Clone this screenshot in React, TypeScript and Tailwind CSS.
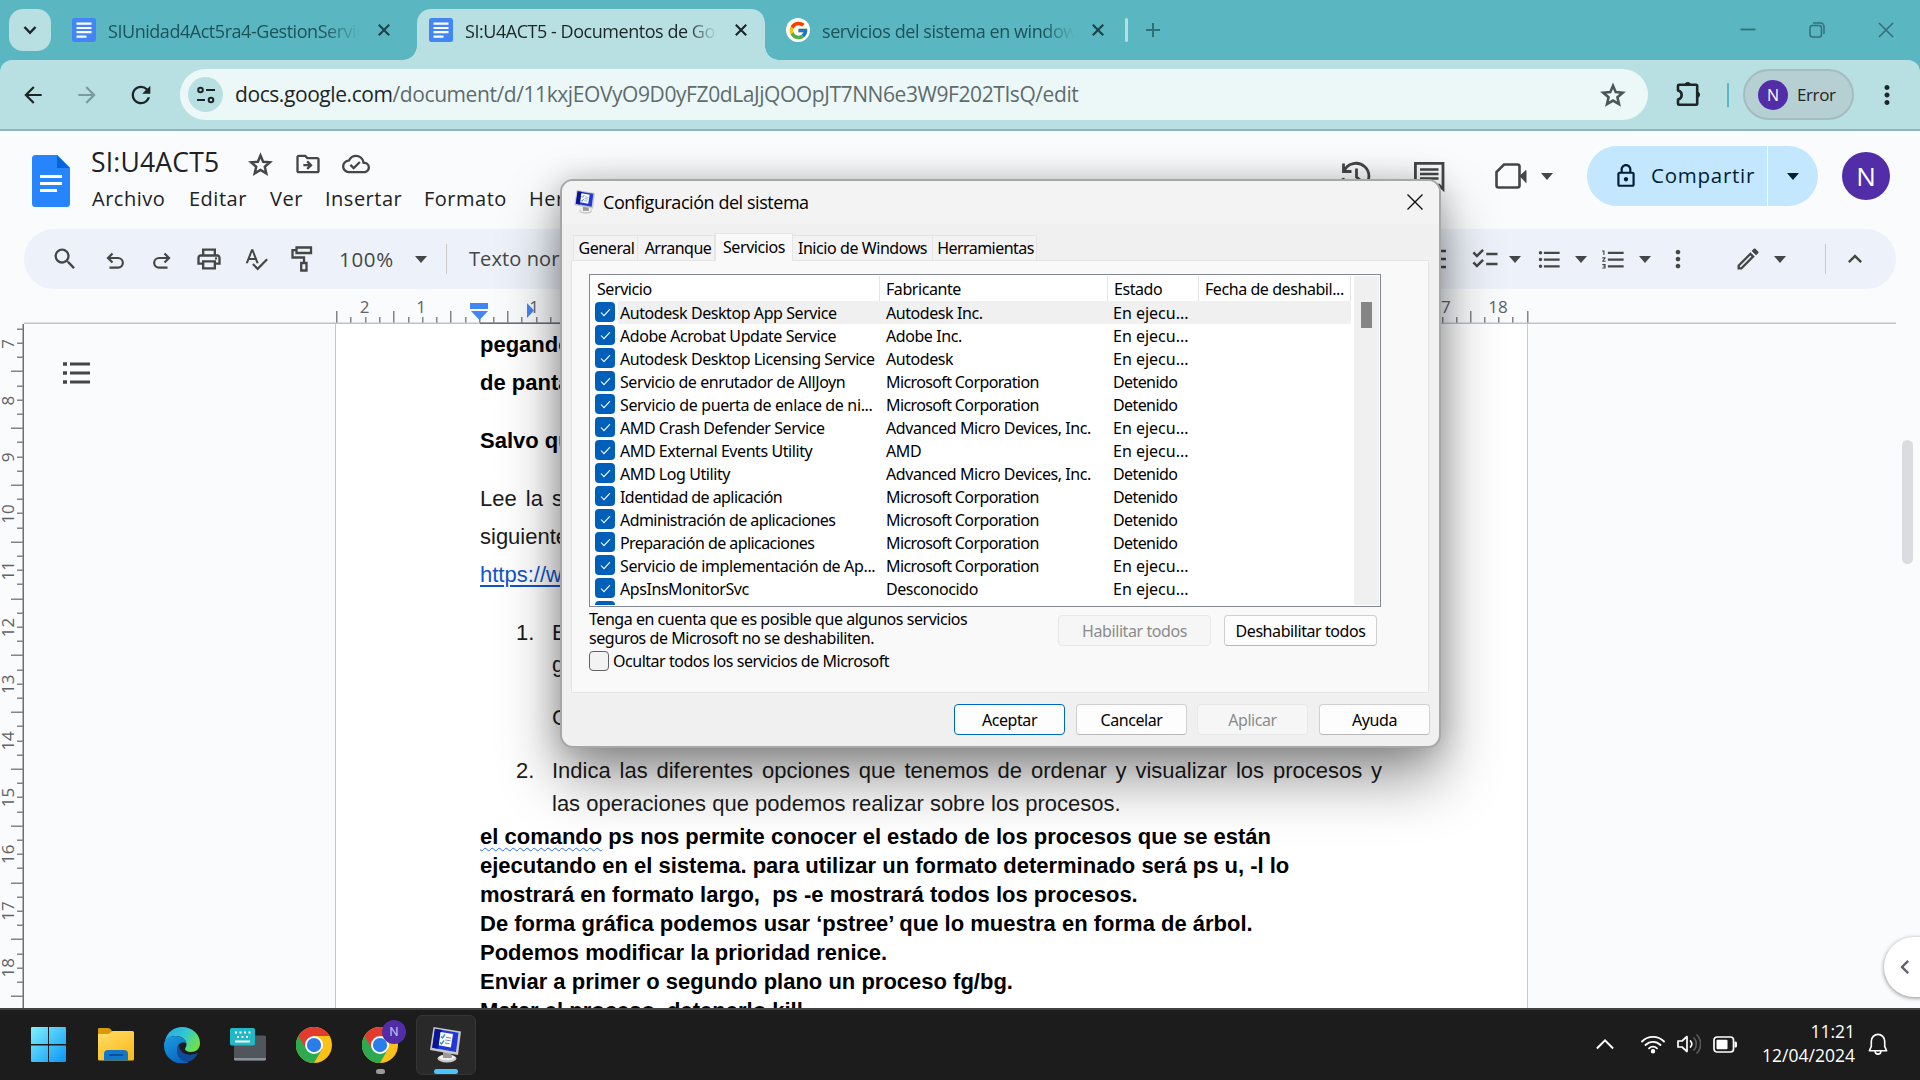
import React from "react";
import {
  MdArrowBack,
  MdArrowForward,
  MdRefresh,
  MdMoreVert,
  MdOutlineDriveFileMove,
  MdOutlineCloudDone,
  MdOutlineLock,
  MdSearch,
  MdOutlinePrint,
  MdSpellcheck,
  MdChecklist,
  MdFormatListBulleted,
  MdFormatListNumbered,
  MdOutlineEdit,
  MdKeyboardArrowUp,
  MdKeyboardArrowLeft,
  MdAdd,
} from "react-icons/md";
import { FcGoogle } from "react-icons/fc";

type Kids = { children?: React.ReactNode; className?: string };

function Slot({ children, className = "w-[47px]" }: Kids) {
  return <span className={"flex shrink-0 items-center justify-center " + className}>{children}</span>;
}

function CloseMark({ className = "" }: { className?: string }) {
  return (
    <svg viewBox="0 0 12 12" className={"size-3 shrink-0 " + className}>
      <path d="m.8.8 10.400 10.400M11.200.8.8 11.200" stroke="currentColor" strokeWidth="2.100" />
    </svg>
  );
}

function Star({ className = "" }: { className?: string }) {
  return (
    <svg viewBox="0 0 24 24" className={"shrink-0 " + className} fill="none" stroke="currentColor" strokeWidth="2.200">
      <path d="m12 4 2.350 5.550 6 .5-4.550 3.950 1.350 5.850L12 16.750l-5.150 3.100 1.350-5.850L3.650 10.050l6-.5Z" />
    </svg>
  );
}

function DocsFavicon() {
  return (
    <svg viewBox="0 0 24 24" className="size-6 shrink-0">
      <rect width="24" height="24" rx="2.5" fill="#4285f4" />
      <path d="M4.500 5.600h15M4.500 10h15M4.500 14.200h15M4.500 18.600h10" stroke="#fff" strokeWidth="2.200" />
    </svg>
  );
}

function ChromeLogo() {
  return (
    <svg viewBox="0 0 48 48" className="size-9 shrink-0">
      <circle cx="24" cy="24" r="24" fill="#fbc116" />
      <path d="M24 24 3.200 12A24 24 0 0 1 44.800 12H24Z" fill="#e33b2e" />
      <path d="M3.200 12A24 24 0 0 0 24 48L34.400 30 24 24Z" fill="#2da94f" />
      <path d="M3.200 12 13.600 30 24 13Z" fill="#e33b2e" />
      <path d="M3.200 12 13.600 30 20 40 8 30Z" fill="#2da94f" />
      <circle cx="24" cy="24" r="12" fill="#fff" />
      <circle cx="24" cy="24" r="9.500" fill="#2b7de9" />
    </svg>
  );
}

function EdgeLogo() {
  return (
    <svg viewBox="0 0 36 36" className="size-9 shrink-0">
      <defs>
        <linearGradient id="edgeTop" x1="0" y1="0" x2="1" y2="0.5">
          <stop offset="0" stopColor="#2aa3e0" />
          <stop offset="0.55" stopColor="#30c6d8" />
          <stop offset="1" stopColor="#6be04d" />
        </linearGradient>
        <linearGradient id="edgeLow" x1="0" y1="0" x2="0.5" y2="1">
          <stop offset="0" stopColor="#1b9de2" />
          <stop offset="1" stopColor="#0a67c0" />
        </linearGradient>
      </defs>
      <path d="M1 14C3 5 10 0 18 0c10 0 18 7 18 16 0 6-4 9-9 9-4 0-6-1.500-6-3 0-1 1.500-2 1.500-4.500C22.500 12 17 9 12 9 7 9 3 11 1 14Z" fill="url(#edgeTop)" />
      <path d="M0 18C0 12 5 9 11 9c6 0 11 3 11.500 8-2-2.500-8-2-9 4-1 7 5 13 11 14.500A18 18 0 0 1 0 18Z" fill="url(#edgeLow)" />
      <path d="M15.500 18C10 24 14 33 23 35.300c5-1.300 8.500-4.300 10.500-8.300.3-.8-.4-1-1-.7-9 4-18-1-17-8.300Z" fill="#0f4a9b" />
    </svg>
  );
}

function ConfigIcon({ className }: { className: string }) {
  return (
    <svg viewBox="0 0 32 36" className={className}>
      <ellipse cx="17" cy="31.500" rx="9.500" ry="4" fill="#c9c9c9" />
      <ellipse cx="17" cy="30.500" rx="8" ry="2.800" fill="#efefef" />
      <path d="m13 23 8 1.500 1 6.500h-9Z" fill="#9a9a9a" />
      <path d="M3.500 0 31 4.500 28 28 0 23Z" fill="#c8c8c8" />
      <path d="M4.900 1.700 28.500 5.700 26 25 2.200 20.800Z" fill="#2038d8" />
      <path d="M4.900 1.700 12 2.900 8 21.800 2.200 20.800Z" fill="#0a1496" />
      <path d="m10.500 5 12.500 2-2.200 13.500-12-2.200Z" fill="#fff" />
      <path d="m11 9.500 1.500 1.500 2.500-3.500M10 15.500l1.500 1.500 2.500-3.500" fill="none" stroke="#2b8fb5" strokeWidth="1.400" />
      <path d="m16 10.300 5 .8M15.500 13l5 .8M15 16l4.500.7" stroke="#6c7fc0" strokeWidth="1" />
    </svg>
  );
}

function TabStrip() {
  return (
    <div className="flex h-[60px] shrink-0 items-start bg-[#5ab6c0] pl-[9px] font-['Open_Sans',sans-serif] text-[18px] leading-[26px]">
      <div className="mt-[9px] flex h-[42px] w-[42px] items-center justify-center rounded-[14px] bg-[#b8e0e3] text-[#1d2527]">
        <svg viewBox="0 0 14 9" className="h-[9px] w-[14px]" fill="none" stroke="currentColor" strokeWidth="2.500">
          <path d="m1.500 1 5.500 5.800L12.500 1" />
        </svg>
      </div>
      <div className="ml-[21px] mt-[9px] flex h-[42px] w-[331px] items-center text-[#1e5259]">
        <DocsFavicon />
        <span className="ml-3 mt-[2px] w-[252px] overflow-hidden whitespace-nowrap tracking-[-0.46px] [mask-image:linear-gradient(to_right,#000_85%,transparent)]">
          SIUnidad4Act5ra4-GestionServicios
        </span>
        <CloseMark className="ml-[18px] text-[#1e4247]" />
      </div>
      <div className="relative ml-[14px] mt-[9px] flex h-[51px] w-[348px] items-center rounded-t-[14px] bg-[#b8e0e3] pb-[9px] pl-[12px] text-[#1d2527]">
        <span className="absolute -left-[14px] bottom-0 size-[14px] bg-[radial-gradient(circle_at_0_0,transparent_13.5px,#b8e0e3_14px)]" />
        <span className="absolute -right-[14px] bottom-0 size-[14px] bg-[radial-gradient(circle_at_100%_0,transparent_13.5px,#b8e0e3_14px)]" />
        <DocsFavicon />
        <span className="ml-3 mt-[2px] w-[252px] overflow-hidden whitespace-nowrap tracking-[-0.46px] [mask-image:linear-gradient(to_right,#000_88%,transparent)]">
          SI:U4ACT5 - Documentos de Google
        </span>
        <CloseMark className="ml-[18px]" />
      </div>
      <div className="ml-[21px] mt-[9px] flex h-[42px] items-center text-[#1e5259]">
        <span className="flex size-6 items-center justify-center rounded-full bg-white">
          <FcGoogle className="size-[21px]" />
        </span>
        <span className="ml-3 mt-[2px] w-[252px] overflow-hidden whitespace-nowrap tracking-[-0.42px] [mask-image:linear-gradient(to_right,#000_88%,transparent)]">
          servicios del sistema en windows
        </span>
        <CloseMark className="ml-[18px] text-[#1e4247]" />
        <span className="ml-[21px] h-6 w-[3px] rounded bg-[#b8e0e3]" />
        <MdAdd className="ml-[13px] size-[24px] text-[#2f7079]" />
      </div>
      <div className="ml-auto flex h-[60px] items-center pr-[26px] text-[#33707a]">
        <svg viewBox="0 0 16 16" className="size-4">
          <path d="M.5 7.500h15" stroke="currentColor" strokeWidth="1.800" />
        </svg>
        <svg viewBox="0 0 16 16" className="ml-[53px] size-4" fill="none" stroke="currentColor" strokeWidth="1.500">
          <rect x="1" y="3.500" width="11.500" height="11.500" rx="2.500" />
          <path d="M4 1h7.500A3.500 3.500 0 0 1 15 4.500V12" />
        </svg>
        <svg viewBox="0 0 16 16" className="ml-[53px] size-4">
          <path d="m1 1 14 14M15 1 1 15" stroke="currentColor" strokeWidth="1.600" />
        </svg>
      </div>
    </div>
  );
}

function AddressBar() {
  return (
    <div className="shrink-0 bg-[#5ab6c0]">
      <div className="flex h-[71px] items-center rounded-t-[12px] border-b-2 border-[#92b4b7] bg-[#b8e0e3] pl-[6px] font-['Open_Sans',sans-serif] text-[#1d2527]">
        <Slot className="w-[54px]"><MdArrowBack className="size-[26px]" /></Slot>
        <Slot className="w-[54px]"><MdArrowForward className="size-[26px] text-[#7a9a9d]" /></Slot>
        <Slot className="w-[54px]"><MdRefresh className="size-[28px]" /></Slot>
        <div className="ml-[12px] flex h-[51px] w-[1468px] items-center rounded-full bg-[#ecf8f8] pl-[8px] pr-[21px]">
          <span className="flex size-[35px] items-center justify-center rounded-full bg-[#b8e0e3]">
            <svg viewBox="0 0 20 20" className="size-5" fill="none" stroke="#1d2527" strokeWidth="2">
              <circle cx="4.500" cy="5" r="2.300" />
              <path d="M10 5h9M1 15h8" />
              <circle cx="15" cy="15" r="2.300" />
            </svg>
          </span>
          <span className="ml-[12px] whitespace-nowrap text-[21px] tracking-[-0.42px] text-[#5f6b6d]">
            <span className="text-[#1d2527]">docs.google.com</span>/document/d/11kxjEOVyO9D0yFZ0dLaJjQOOpJT7NN6e3W9F202TIsQ/edit
          </span>
          <Star className="ml-auto size-[28px] text-[#4c5557]" />
        </div>
        <svg viewBox="0 0 26 26" className="-mt-[2px] ml-[28px] size-[26px]" fill="none" stroke="currentColor" strokeWidth="2.600">
          <path d="M2 4.500Q2 3.800 3 3.800H20Q21.200 3.800 21.200 5V22.500Q21.200 23.700 20 23.700H3Q2 23.700 2 22.500V18.500A4.600 4.600 0 0 0 2 9.500Z" strokeLinejoin="round" />
          <path d="M8.800 3.500a3 2.800 0 0 1 5.800 0ZM21.500 10.800a2.800 3 0 0 1 0 5.800Z" fill="currentColor" strokeWidth="1" />
        </svg>
        <span className="ml-[25px] h-6 w-[2px] bg-[#5ab6c0]" />
        <div className="ml-[14px] flex h-[51px] w-[111px] items-center rounded-full border-2 border-[#a3bcbf] bg-[#b5cfd2] pl-[13px]">
          <span className="flex size-[30px] items-center justify-center rounded-full bg-[#512da8] text-[16px] text-white">N</span>
          <span className="ml-[9px] text-[17px] tracking-[-0.4px]">Error</span>
        </div>
        <MdMoreVert className="ml-[18px] size-[30px]" />
      </div>
    </div>
  );
}

function Caret({ className = "" }: { className?: string }) {
  return (
    <svg viewBox="0 0 12 7" className={"h-[7px] w-3 shrink-0 " + className}>
      <path d="M0 0h12L6 7Z" fill="currentColor" />
    </svg>
  );
}

function DocsHeader() {
  return (
    <div className="flex h-[98px] shrink-0 items-start pl-8 pr-[30px] text-[#202124]">
      <svg viewBox="0 0 38 52" className="mt-6 h-[52px] w-[38px]">
        <path d="M3.500 0H25l13 13v35.500a3.500 3.500 0 0 1-3.500 3.500h-31A3.500 3.500 0 0 1 0 48.500v-45A3.500 3.500 0 0 1 3.500 0Z" fill="#2684fc" />
        <path d="m25 0 13 13H25Z" fill="#0066da" />
        <path d="M8 21.500h22M8 28.500h22M8 35.500h17" stroke="#fff" strokeWidth="2.800" />
      </svg>
      <div className="ml-[22px] mt-[13px]">
        <div className="flex h-9 items-center">
          <span className="-ml-px w-[156px] font-['Open_Sans',sans-serif] text-[26.5px] leading-9 tracking-[0.2px]">SI:U4ACT5</span>
          <Star className="mt-1 size-[27px] text-[#444746]" />
          <MdOutlineDriveFileMove className="ml-[20px] mt-1 size-[28px] text-[#444746]" />
          <MdOutlineCloudDone className="ml-[20px] mt-1 size-[28px] text-[#444746]" />
        </div>
        <div className="mt-[5px] flex h-7 items-center font-['Open_Sans',sans-serif] text-[20px] tracking-[0.5px]">
          <span className="w-[97px]">Archivo</span>
          <span className="w-[81px]">Editar</span>
          <span className="w-[55px]">Ver</span>
          <span className="w-[99px]">Insertar</span>
          <span className="w-[105px]">Formato</span>
          <span>Herramientas</span>
        </div>
      </div>
      <div className="ml-auto mt-[15px] flex h-[60px] items-center text-[#444746]">
        <svg viewBox="0 0 32 32" className="size-[32px]" fill="none" stroke="currentColor" strokeWidth="2.800">
          <path d="M3.500 3.500v8h8M4 11A13 13 0 1 1 3 18" />
          <path d="M16.500 8.500V17l6 5" />
        </svg>
        <svg viewBox="0 0 32 32" className="ml-[41px] size-[32px]" fill="none" stroke="currentColor" strokeWidth="2.800">
          <path d="M30 29V3.400H2.400v21.800H26Z" />
          <path d="M7 9.500h18.500M7 14h18.500M7 18.500h18.500" strokeWidth="2.400" />
        </svg>
        <svg viewBox="0 0 32 26" className="ml-[50px] h-[26px] w-8" fill="none" stroke="currentColor" strokeWidth="2.600">
          <path d="M9 1.500h13.500A2 2 0 0 1 24.500 3.500v19a2 2 0 0 1-2 2h-19a2 2 0 0 1-2-2V9Z" />
          <path d="M25 13 31 7.500v12Z" fill="currentColor" strokeWidth="1" />
        </svg>
        <Caret className="ml-[14px]" />
        <div className="ml-[34px] flex h-[60px] w-[231px] overflow-hidden rounded-full text-[#001d35]">
          <div className="flex flex-1 items-center bg-[#c2e7ff] pb-px pl-[26px]">
            <MdOutlineLock className="size-[26px]" />
            <span className="ml-[12px] font-['Open_Sans',sans-serif] text-[20.5px] font-medium tracking-[0.75px]">Compartir</span>
          </div>
          <div className="ml-px flex w-[50px] items-center bg-[#c2e7ff] pl-[19px]"><Caret /></div>
        </div>
        <span className="ml-[24px] flex size-12 items-center justify-center rounded-full bg-[#512da8] font-['Open_Sans',sans-serif] text-[26px] text-white">N</span>
      </div>
    </div>
  );
}

function DocsToolbar() {
  return (
    <div className="mx-6 flex h-[60px] shrink-0 items-center rounded-full bg-[#edf2fa] pl-[17px] text-[#444746]">
      <Slot><MdSearch className="size-[28px]" /></Slot>
      <Slot className="w-[54px]">
        <svg viewBox="0 0 18 18" className="mt-[3px] size-[18px]" fill="none" stroke="currentColor" strokeWidth="2.200">
          <path d="M6.500 1.500 2 6l4.500 4.500M2 6h10a4.500 4.500 0 0 1 0 9.700H3.500" />
        </svg>
      </Slot>
      <Slot className="w-[40px]">
        <svg viewBox="0 0 18 18" className="mt-[3px] size-[18px]" fill="none" stroke="currentColor" strokeWidth="2.200">
          <path d="M11.500 1.500 16 6l-4.500 4.500M16 6H6a4.500 4.500 0 0 0 0 9.700h8.500" />
        </svg>
      </Slot>
      <Slot className="w-[54px]"><MdOutlinePrint className="size-[28px]" /></Slot>
      <Slot className="w-[40px]"><MdSpellcheck className="size-[26px]" /></Slot>
      <Slot className="w-[53px]">
        <svg viewBox="0 0 22 26" className="mr-[2px] h-[26px] w-[22px]" fill="none" stroke="currentColor" strokeWidth="2.300">
          <path d="M5.500 1.500h14.500v5.500H5.500ZM5.500 4.200H1.500v7.300h11.500V17" />
          <path d="M10.200 17h5.300v7.500h-5.300Z" />
        </svg>
      </Slot>
      <span className="ml-[10px] w-[76px] font-['Open_Sans',sans-serif] text-[20.5px] tracking-[0.7px]">100%</span>
      <Caret />
      <span className="ml-[19px] h-[30px] w-px bg-[#c7c7c7]" />
      <span className="ml-[22px] w-[160px] whitespace-nowrap font-['Open_Sans',sans-serif] text-[20px] tracking-[0.1px]">Texto normal</span>
      <div className="ml-auto flex items-center pr-[27px]">
        <svg viewBox="0 0 22 22" className="size-[22px]">
          <path d="M0 3h22M0 11h22M0 19h22" stroke="currentColor" strokeWidth="2.400" />
        </svg>
        <Slot className="ml-[17px] w-[44px]"><MdChecklist className="size-[30px]" /></Slot>
        <Slot className="w-[16px]"><Caret /></Slot>
        <Slot className="w-[52px]"><MdFormatListBulleted className="size-[27px]" /></Slot>
        <Slot className="w-[12px]"><Caret /></Slot>
        <Slot className="w-[52px]"><MdFormatListNumbered className="size-[27px]" /></Slot>
        <Slot className="w-[12px]"><Caret /></Slot>
        <Slot className="w-[54px]"><MdMoreVert className="size-[28px]" /></Slot>
        <MdOutlineEdit className="ml-[29px] size-[28px]" />
        <Caret className="ml-[12px]" />
        <span className="ml-[39px] h-[30px] w-px bg-[#c7c7c7]" />
        <MdKeyboardArrowUp className="ml-[15px] size-[28px]" />
      </div>
    </div>
  );
}

function TopRuler() {
  const ticks: { x: number; tall: boolean }[] = [];
  for (let i = -10; i <= 74; i++) {
    const x = i < 0 ? 479 + i * 14.3 : 479 + i * 14.157;
    ticks.push({ x: Math.round(x), tall: Math.abs(i % 4) === 2 });
  }
  const labels = [
    { n: 2, x: 364.5 },
    { n: 1, x: 421 },
    { n: 1, x: 534 },
    { n: 17, x: 1441 },
    { n: 18, x: 1498 },
  ];
  return (
    <svg viewBox="0 0 1920 35" className="h-[35px] w-full shrink-0">
      {ticks.map((t) => (
        <rect key={t.x} x={t.x} y={t.tall ? 22 : 28} width="1.500" height={t.tall ? 13 : 7} fill="#80868b" />
      ))}
      {labels.map((l) => (
        <text key={l.x} x={l.x} y="24" textAnchor="middle" fontSize="17" fontFamily="Open Sans" fill="#5f6368">
          {l.n}
        </text>
      ))}
      <rect x="24" y="33.500" width="1872" height="1.500" fill="#c0c4c7" />
      <rect x="480" y="33.500" width="904" height="1.500" fill="#6b7074" />
      <path d="M470 14h18v6h-18ZM471 22h17l-8.500 9Z" fill="#4285f4" />
      <path d="M527 14v15l7-7.500Z" fill="#4285f4" />
    </svg>
  );
}

function SideRuler() {
  const ticks = Array.from({ length: 49 }, (_, i) => i - 1);
  return (
    <svg viewBox="0 0 24 684" className="h-[684px] w-6 shrink-0">
      <rect x="22.500" y="0" width="1.500" height="684" fill="#6b7074" />
      {ticks.map((i) => {
        const y = Math.round(19 + i * 14.2);
        const long = (i + 4) % 4 === 2;
        return <rect key={i} x={long ? 11 : 17} y={y - 0.5} width={long ? 12 : 6} height="1.500" fill="#80868b" />;
      })}
      {Array.from({ length: 12 }, (_, i) => (
        <text
          key={i}
          transform={`translate(13.5 ${20 + i * 56.7}) rotate(-90)`}
          textAnchor="middle"
          fontSize="17"
          fontFamily="Open Sans"
          fill="#5f6368"
        >
          {i + 7}
        </text>
      ))}
    </svg>
  );
}

function DocumentArea() {
  return (
    <div className="relative flex h-[684px] shrink-0 overflow-hidden">
      <SideRuler />
      <div className="w-[311px] shrink-0 pl-[38px] pt-[35px] text-[#444746]">
        <svg viewBox="0 0 30 28" className="h-7 w-[30px]">
          <path d="M8 5h20M8 14h20M8 23h20" stroke="currentColor" strokeWidth="3" />
          <path d="M1 5h4M1 14h4M1 23h4" stroke="currentColor" strokeWidth="3.600" />
        </svg>
      </div>
      <div className="w-[1193px] shrink-0 border-x border-[#c7c7c7] bg-white pl-[144px] pr-[144px] font-['Liberation_Sans',Arial,sans-serif] text-[22px] text-black">
        <div className="h-[77px] whitespace-nowrap pt-[2px] font-bold leading-[38px]">
          pegando las
          <br />
          de pantalla
        </div>
        <p className="mt-[21px] font-bold leading-[38px]">Salvo que</p>
        <div className="mt-[20px] leading-[38px] text-[#1c1c1c]">
          <p className="[word-spacing:3px]">Lee la siguiente</p>
          <p>siguiente</p>
          <p className="text-[#1155cc] underline underline-offset-[3px]">https://www</p>
        </div>
        <div className="mt-[22px] flex leading-[33px] text-[#1c1c1c]">
          <span className="w-[72px] shrink-0 pl-[36px]">1.</span>
          <div>
            <p>En</p>
            <p className="-mt-px">g</p>
            <p className="mt-[20px]">C</p>
          </div>
        </div>
        <div className="mt-[20px] flex leading-[33px] text-[#1c1c1c]">
          <span className="w-[72px] shrink-0 pl-[36px]">2.</span>
          <div className="w-[830px] whitespace-nowrap">
            <p className="[text-align-last:justify]">Indica las diferentes opciones que tenemos de ordenar y visualizar los procesos y</p>
            <p>las operaciones que podemos realizar sobre los procesos.</p>
          </div>
        </div>
        <div className="mt-[2px] whitespace-pre font-bold leading-[29px]">
          <p>
            <span className="underline decoration-[#2a6df0] decoration-wavy decoration-[1.25px] underline-offset-[3px] [text-decoration-skip-ink:none]">el comando</span>
            {" ps nos permite conocer el estado de los procesos que se están"}
          </p>
          <p>ejecutando en el sistema. para utilizar un formato determinado será ps u, -l lo</p>
          <p>{"mostrará en formato largo,  ps -e mostrará todos los procesos."}</p>
          <p>De forma gráfica podemos usar ‘pstree’ que lo muestra en forma de árbol.</p>
          <p>Podemos modificar la prioridad renice.</p>
          <p>Enviar a primer o segundo plano un proceso fg/bg.</p>
          <p>Matar el proceso, detenerlo kill.</p>
        </div>
      </div>
      <div className="absolute right-[7px] top-[116px] h-[124px] w-[11px] rounded-full bg-[#dadce0]" />
      <div className="absolute -right-[28px] top-[613px] flex h-[60px] w-[64px] items-center rounded-full bg-white pl-[7px] text-[#5f6368] shadow-[0_1px_4px_rgba(0,0,0,0.45)]">
        <MdKeyboardArrowLeft className="size-[28px]" />
      </div>
    </div>
  );
}

const services: [string, string, string][] = [
  ["Autodesk Desktop App Service", "Autodesk Inc.", "En ejecu..."],
  ["Adobe Acrobat Update Service", "Adobe Inc.", "En ejecu..."],
  ["Autodesk Desktop Licensing Service", "Autodesk", "En ejecu..."],
  ["Servicio de enrutador de AllJoyn", "Microsoft Corporation", "Detenido"],
  ["Servicio de puerta de enlace de ni...", "Microsoft Corporation", "Detenido"],
  ["AMD Crash Defender Service", "Advanced Micro Devices, Inc.", "En ejecu..."],
  ["AMD External Events Utility", "AMD", "En ejecu..."],
  ["AMD Log Utility", "Advanced Micro Devices, Inc.", "Detenido"],
  ["Identidad de aplicación", "Microsoft Corporation", "Detenido"],
  ["Administración de aplicaciones", "Microsoft Corporation", "Detenido"],
  ["Preparación de aplicaciones", "Microsoft Corporation", "Detenido"],
  ["Servicio de implementación de Ap...", "Microsoft Corporation", "En ejecu..."],
  ["ApsInsMonitorSvc", "Desconocido", "En ejecu..."],
  ["", "", ""],
];

function nameTracking(name: string) {
  if (name.endsWith("...")) return "w-[266px] tracking-[-0.35px]";
  if (name.includes("aplicaci")) return "w-[266px] tracking-[-0.56px]";
  return "w-[266px]";
}

function DialogButton({ children, className = "" }: Kids) {
  return <span className={"flex h-[31px] items-center justify-center rounded-[4px] border pt-px " + className}>{children}</span>;
}

const enabled = "border-[#d0d0d0] border-b-[#b8b8b8] bg-[#fdfdfd] text-black";
const disabled = "border-[#e8e8e8] bg-[#f6f6f6] text-[#8b8b8b]";

function ServiceList() {
  return (
    <div className="flex h-[333px] w-[792px] border border-[#828790] bg-white p-px">
      <div className="w-[764px] overflow-hidden">
        <div className="flex h-[25px] items-center leading-[26px]">
          <span className="h-full w-[289px] border-r border-[#e5e5e5] pl-[6px]">Servicio</span>
          <span className="h-full w-[228px] border-r border-[#e5e5e5] pl-[6px]">Fabricante</span>
          <span className="h-full w-[91px] border-r border-[#e5e5e5] pl-[6px]">Estado</span>
          <span className="h-full w-[152px] whitespace-nowrap border-r border-[#e5e5e5] pl-[6px]">Fecha de deshabil...</span>
        </div>
        {services.map(([name, maker, state], i) => (
          <div key={i} className="flex h-[23px] whitespace-nowrap pl-1 leading-[24px]">
            <span className="mt-px flex size-5 shrink-0 items-center justify-center rounded-[4px] bg-[#005fb8]">
              <svg viewBox="0 0 12 10" className="h-[9px] w-[11px]">
                <path d="m1 5 3.300 3.500L11 1.300" fill="none" stroke="#fff" strokeWidth="1.200" />
              </svg>
            </span>
            <span className={"ml-[3px] flex w-[733px] pl-[2px] " + (i === 0 ? "bg-[#f0f0f0]" : "")}>
              <span className={nameTracking(name)}>{name}</span>
              <span className={maker.startsWith("Microsoft") ? "w-[227px] tracking-[-0.62px]" : "w-[227px]"}>{maker}</span>
              <span className={state.startsWith("En") ? "tracking-[0px]" : "tracking-[-0.6px]"}>{state}</span>
            </span>
          </div>
        ))}
      </div>
      <div className="w-[25px] bg-[#f0f0f0] pl-[7px] pt-[26px]">
        <div className="h-[26px] w-[11px] bg-[#858585]" />
      </div>
    </div>
  );
}

function ConfigDialog() {
  const tab = "flex h-[25px] items-center justify-center border border-b-0 border-[#e5e5e5] bg-[#f3f3f3] pt-px";
  return (
    <div className="absolute left-[560px] top-[179px] h-[569px] w-[881px] overflow-hidden rounded-[13px] border-2 border-[#a6a8a8] bg-[#f0f0f0] font-['Noto_Sans',sans-serif] text-[16px] leading-[25px] tracking-[-0.43px] text-black shadow-[0_30px_60px_rgba(0,0,0,0.42),0_2px_30px_rgba(0,0,0,0.2)]">
      <div className="flex h-[43px] items-center bg-[#f3f3f3] pb-[2px] pl-[12px]">
        <ConfigIcon className="h-[24px] w-[22px]" />
        <span className="ml-[7px] mt-px font-['Open_Sans',sans-serif] text-[18px] tracking-[-0.45px]">Configuración del sistema</span>
        <svg viewBox="0 0 16 16" className="ml-auto mr-[16px] size-4">
          <path d="m.5.5 15 15M15.500.5l-15 15" stroke="#111" strokeWidth="1.400" />
        </svg>
      </div>
      <div className="mt-[9px] flex h-[27px] items-end whitespace-nowrap pl-[11px]">
        <span className={tab + " w-[65px] pl-[2px]"}>General</span>
        <span className={tab + " w-[77px] border-l-0 pl-[4px] tracking-[-0.5px]"}>Arranque</span>
        <span className="relative -mb-px flex h-[28px] w-[78px] items-center justify-center border border-b-0 border-[#e5e5e5] bg-[#f9f9f9]">Servicios</span>
        <span className={tab + " w-[140px] border-l-0"}>Inicio de Windows</span>
        <span className={tab + " w-[104px] border-l-0 pl-[2px] tracking-[-0.55px]"}>Herramientas</span>
      </div>
      <div className="ml-[9px] h-[433px] w-[858px] border border-[#e5e5e5] bg-[#f9f9f9] pl-[17px] pt-[13px]">
        <ServiceList />
        <div className="flex w-[792px] items-start">
          <p className="w-[469px] pt-[3px] leading-[19px] tracking-[-0.46px]">
            Tenga en cuenta que es posible que algunos servicios
            <br />
            seguros de Microsoft no se deshabiliten.
          </p>
          <DialogButton className={"mt-[8px] w-[153px] " + disabled}>Habilitar todos</DialogButton>
          <DialogButton className={"ml-[13px] mt-[8px] w-[153px] " + enabled}>Deshabilitar todos</DialogButton>
        </div>
        <div className="mt-[3px] flex h-5 items-center">
          <span className="size-5 rounded-[4px] border border-[#626262] bg-[#f3f3f3]" />
          <span className="ml-[4px] tracking-[-0.47px]">Ocultar todos los servicios de Microsoft</span>
        </div>
      </div>
      <div className="mt-[11px] flex justify-end pr-[9px]">
        <DialogButton className="w-[111px] border-[#0067c0] bg-[#fdfdfd]">Aceptar</DialogButton>
        <DialogButton className={"ml-[11px] w-[111px] " + enabled}>Cancelar</DialogButton>
        <DialogButton className={"ml-[10px] w-[111px] " + disabled}>Aplicar</DialogButton>
        <DialogButton className={"ml-[11px] w-[111px] " + enabled}>Ayuda</DialogButton>
      </div>
    </div>
  );
}

function Taskbar() {
  return (
    <div className="relative flex h-[72px] shrink-0 items-center border-t-2 border-[#414141] bg-[#1c1c1c] pb-px pl-[31px] text-white">
      <svg viewBox="0 0 35 35" className="size-[35px]">
        <defs>
          <linearGradient id="win" x1="0" y1="0" x2="1" y2="1">
            <stop offset="0" stopColor="#7ff1ff" />
            <stop offset="1" stopColor="#0a95f5" />
          </linearGradient>
        </defs>
        <path d="M1 0h16v17H0V1Q0 0 1 0ZM18 0h16q1 0 1 1v16H18ZM0 18.500h17V35H1q-1 0-1-1ZM18 18.500h17V34q0 1-1 1H18Z" fill="url(#win)" />
      </svg>
      <svg viewBox="0 0 36 33" className="ml-8 h-[33px] w-9">
        <defs>
          <linearGradient id="folder" x1="0" y1="0" x2="0.6" y2="1">
            <stop offset="0" stopColor="#ffdf6b" />
            <stop offset="1" stopColor="#fdbb1d" />
          </linearGradient>
        </defs>
        <path d="M1 0h9q2 0 3 1.500L14.500 4H34v6H0V1Q0 0 1 0Z" fill="#d99a08" />
        <path d="M12 5 14.500 3H34.500Q36 3 36 4.500V31q0 1.500-1.500 1.500h-33Q0 32.500 0 31V6h9.500Q11 6 12 5Z" fill="url(#folder)" />
        <path d="M6 32.500V26q0-4 4-4h16q4 0 4 4v6.500Z" fill="#1277c8" />
        <path d="M11 27h14" stroke="#0a4a8c" strokeWidth="1.600" />
      </svg>
      <span className="ml-[30px]"><EdgeLogo /></span>
      <svg viewBox="0 0 36 33" className="ml-[30px] h-[33px] w-9">
        <rect x="4" y="7.500" width="32" height="25" rx="1.500" fill="#50565c" />
        <path d="M4 30h32v1q0 1.500-1.500 1.500h-29Q4 32.500 4 31Z" fill="#8a9299" />
        <rect width="25" height="17.500" rx="1.800" fill="#22b8c6" />
        <path d="M5 4.500h16M7 8.800h12" stroke="#fff" strokeWidth="1.800" strokeDasharray="2 2.500" />
        <path d="M5 13.500h15" stroke="#fff" strokeWidth="2" />
      </svg>
      <span className="ml-[30px]"><ChromeLogo /></span>
      <span className="relative ml-[30px]">
        <ChromeLogo />
        <span className="absolute -right-[8px] -top-[7px] flex size-6 items-center justify-center rounded-full bg-[#512da8] font-['Roboto',sans-serif] text-[13px] text-[#c8b8e8]">N</span>
        <span className="absolute -bottom-[11px] left-[14px] h-[5px] w-[9px] rounded-full bg-[#9a9a9a]" />
      </span>
      <span className="relative ml-[18px] flex size-[60px] items-center justify-center rounded-[6px] border border-[#353535] bg-[#292929]">
        <ConfigIcon className="h-9 w-8" />
        <span className="absolute bottom-0 left-[17px] h-[5px] w-6 rounded-full bg-[#4cc2ff]" />
      </span>
      <div className="ml-auto flex items-center pb-px pr-[32px]">
        <svg viewBox="0 0 20 12" className="h-3 w-[18px]" fill="none" stroke="#fff" strokeWidth="2.200">
          <path d="m1 11 9-9 9 9" />
        </svg>
        <svg viewBox="0 0 24 20" className="ml-[27px] h-5 w-6" fill="none" stroke="#fff" strokeWidth="1.800" strokeLinecap="round">
          <path d="M1 7.500a15.500 15.500 0 0 1 22 0M4.500 11a10.600 10.600 0 0 1 15 0M8 14.300a5.700 5.700 0 0 1 8 0" />
          <circle cx="12" cy="17.300" r="1.300" fill="#fff" />
        </svg>
        <svg viewBox="0 0 24 20" className="ml-3 h-5 w-6" fill="none" stroke="#fff" strokeWidth="1.700" strokeLinecap="round">
          <path d="M1 7v6h4l5 4.500v-15L5 7Z" strokeLinejoin="round" />
          <path d="M13.500 7a4.500 4.500 0 0 1 0 6" />
          <path d="M17 4a9 9 0 0 1 0 12M20 1a13 13 0 0 1 0 18" stroke="#5a5a5a" />
        </svg>
        <svg viewBox="0 0 24 17" className="ml-3 h-[17px] w-6">
          <rect x="1" y="1" width="19.500" height="15" rx="3" fill="none" stroke="#fff" strokeWidth="1.700" />
          <rect x="3.500" y="3.800" width="11" height="9.500" rx="1" fill="#fff" />
          <path d="M21.500 5.500h1q1.500 0 1.500 1.500v3q0 1.500-1.500 1.500h-1Z" fill="#fff" />
        </svg>
        <div className="ml-4 w-[102px] pb-[2px] text-right font-['Open_Sans',sans-serif] text-[17.5px] leading-6 tracking-[0px]">
          <div>11:21</div>
          <div>12/04/2024</div>
        </div>
        <svg viewBox="0 0 20 24" className="ml-[13px] h-[23px] w-5" fill="none" stroke="#fff" strokeWidth="1.700" strokeLinejoin="round">
          <path d="M1 18.500 3 14V8.500a7 7 0 0 1 14 0V14l2 4.500ZM7 19a3 3 0 0 0 6 0" />
        </svg>
      </div>
    </div>
  );
}

export default function App() {
  return (
    <div className="relative flex h-[1080px] w-[1920px] flex-col overflow-hidden bg-[#f9fbfd]">
      <TabStrip />
      <AddressBar />
      <DocsHeader />
      <DocsToolbar />
      <TopRuler />
      <DocumentArea />
      <ConfigDialog />
      <Taskbar />
    </div>
  );
}
